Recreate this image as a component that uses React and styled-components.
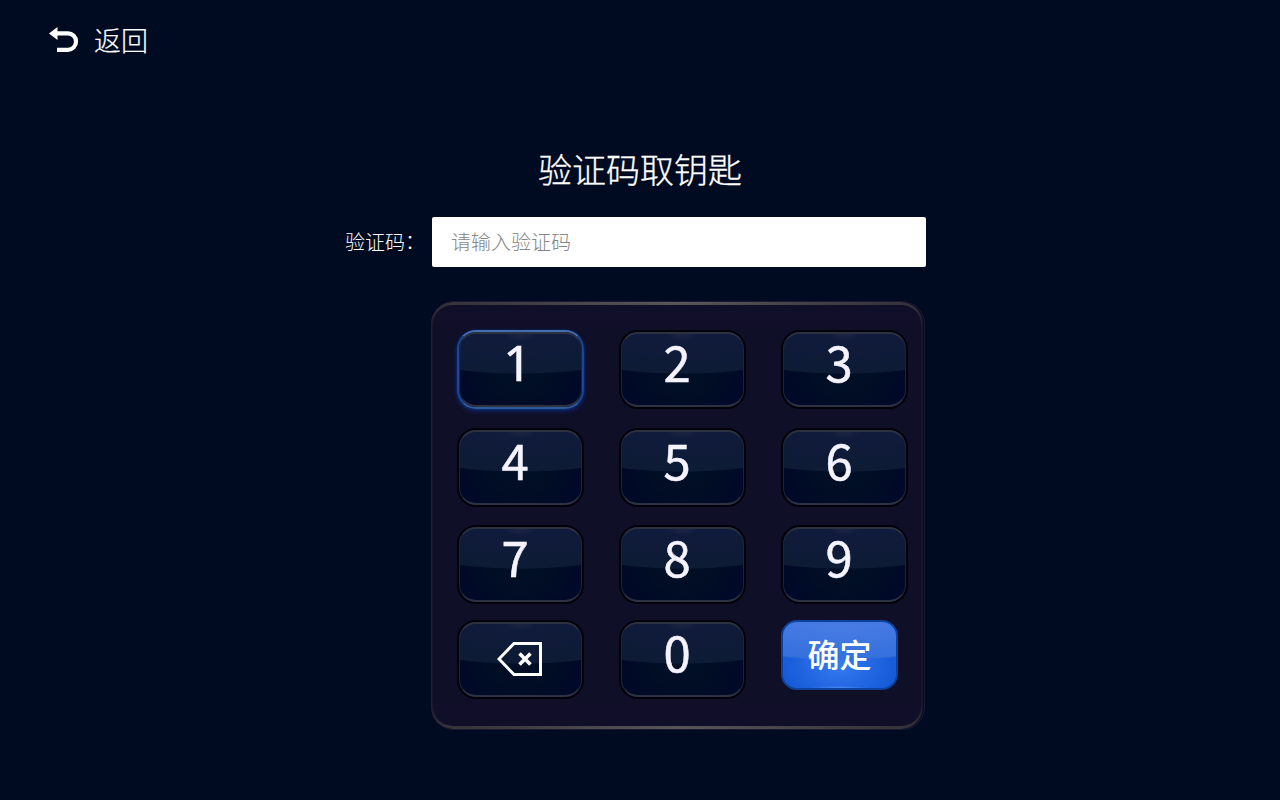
import React from "react";
import styled, { createGlobalStyle, css } from "styled-components";

const GlobalStyle = createGlobalStyle`
  * { box-sizing: border-box; }
  body {
    margin: 0;
    background: #000b21;
    font-family: "Noto Sans CJK SC", sans-serif;
  }
`;

const Screen = styled.main`
  display: flex;
  flex-direction: column;
  width: 1280px;
  height: 800px;
  overflow: hidden;
  color: #fff;
  background: #000b21;
`;

const Header = styled.header`
  display: flex;
  height: 80px;
  padding: 20px 0 0 48px;
`;

const BackButton = styled.button`
  display: flex;
  align-items: center;
  gap: 14px;
  height: 40px;
  padding: 0;
  border: 0;
  background: none;
  color: #fff;
  font: 300 27px/40px "Noto Sans CJK SC", sans-serif;
  -webkit-text-stroke: 0.2px #fff;
`;

const Title = styled.h1`
  margin: 64px 0 0;
  height: 50px;
  text-align: center;
  font-size: 34px;
  line-height: 50px;
  font-weight: 300;
  -webkit-text-stroke: 0.3px #fff;
`;

const Field = styled.label`
  display: flex;
  align-items: center;
  margin: 23px 0 0 345px;
  height: 50px;
`;

const FieldLabel = styled.span`
  display: flex;
  width: 87px;
  font-size: 20px;
  line-height: 50px;
  font-weight: 300;
  white-space: nowrap;
`;

const Colon = styled.span`
  line-height: 47px;
`;

const CodeInput = styled.input`
  width: 494px;
  height: 50px;
  padding: 0 19px 2px;
  border: 0;
  border-radius: 2px;
  outline: 0;
  background: #fff;
  color: #222;
  font: 300 20px "Noto Sans CJK SC", sans-serif;
  &::placeholder { color: #858585; opacity: 1; }
`;

const Panel = styled.section`
  position: relative;
  width: 494px;
  height: 429px;
  margin: 34px 0 0 431px;
  padding: 29px 0 0 26px;
  border-radius: 23px;
  background: #110f29;
  box-shadow: inset 0 0 0 1px #1b1832, inset -3px 0 0 -1px #090a22;
  &::before {
    content: "";
    position: absolute;
    inset: 1px 2px 1px 0;
    border: solid transparent;
    border-width: 3px 2px;
    border-radius: 22px;
    background:
      linear-gradient(#110f29, #110f29) padding-box,
      linear-gradient(90deg, #36333a, #3b3840 10%, #5b5959 50%, #3b3840 90%, #36333a) border-box;
    mask-image: linear-gradient(#000 0, #0009 14px, #0003 24px, #0003 calc(100% - 24px), #0009 calc(100% - 14px), #000 100%);
  }
`;

const Keys = styled.div`
  position: relative;
  display: grid;
  grid-template-columns: repeat(3, 127px);
  grid-template-rows: repeat(4, 79px);
  column-gap: 35px;
`;

const activeKey = css`
  border-color: #194793;
  border-top-color: #416eb1;
  border-bottom-color: #315996;
  box-shadow: 0 2px 4px #0739a0aa, 0 0 2px #0750bf88, inset 0 0 2px #1757a9;
`;

const Key = styled.button`
  position: relative;
  width: 127px;
  height: 79px;
  margin-top: ${({ $shift }) => $shift || 0}px;
  padding: 0 11px 18px 0;
  display: flex;
  align-items: center;
  justify-content: center;
  border: 2px solid #020208;
  border-radius: 19px;
  color: #f5f3ff;
  background:
    radial-gradient(ellipse 16px 9px at 50% 0, #30324988, transparent),
    radial-gradient(ellipse 150px 42px at 50% 0, #111b3e 0, #0d1b34 98%, transparent 100%),
    radial-gradient(ellipse 80px 62px at 50% 55%, #000f26 0, #000d25 40%, #00072a 100%);
  font: 400 49px/59px "Noto Sans CJK SC", sans-serif;
  -webkit-text-stroke: 0.5px #f5f3ff;
  ${({ $active }) => $active && activeKey}
  &::after {
    content: "";
    position: absolute;
    inset: 0;
    border: 1px solid #1a263b;
    border-top: 2px solid #2c3140;
    border-bottom: 2px solid #2c3243;
    border-radius: 17px;
  }
`;

const PlainOne = styled.span`
  margin-left: 5px;
  padding-top: 4px;
  font: 400 50px/59px "Noto Sans", sans-serif;
`;

const ConfirmKey = styled.button`
  width: 117px;
  height: 70px;
  padding: 0 0 4px;
  border: 2px solid #0d419b;
  border-radius: 16px;
  color: #fff;
  background:
    radial-gradient(ellipse 30px 2px at 50% 100%, #4e8df0, transparent),
    radial-gradient(ellipse 150px 38px at 50% 0, #4b7de5 0, #3470dc 97%, transparent 100%),
    radial-gradient(ellipse 65px 45px at 50% 65%, #347af0, #1256d4);
  box-shadow: inset 0 1px 1px #427bdb;
  font: 500 32px/62px "Noto Sans CJK SC", sans-serif;
`;

const ConfirmKeySlot = styled.div`
  padding-top: 53px;
`;

const BackIcon = () => (
  <svg width="32" height="32" viewBox="0 0 32 32">
    <path d="M1 9.5 9.5 3v13Z" fill="#fff" />
    <path d="M8 9.3h12a8 8.2 0 0 1 0 16.5H9" fill="none" stroke="#fff" strokeWidth="4.2" />
  </svg>
);

const DeleteIcon = styled.svg`
  position: absolute;
  left: 38px;
  top: 19px;
`;

const digits = ["1", "2", "3", "4", "5", "6", "7", "8", "9"];
const rowShift = [0, 19, 37];

export default function App() {
  return (
    <Screen>
      <GlobalStyle />
      <Header>
        <BackButton><BackIcon />返回</BackButton>
      </Header>
      <Title>验证码取钥匙</Title>
      <Field>
        <FieldLabel>验证码<Colon>：</Colon></FieldLabel>
        <CodeInput placeholder="请输入验证码" />
      </Field>
      <Panel>
        <Keys>
          {digits.map((digit, i) => (
            <Key key={digit} $active={i === 0} $shift={rowShift[Math.floor(i / 3)]}>
              {digit === "1" ? <PlainOne>1</PlainOne> : digit}
            </Key>
          ))}
          <Key $shift={53} aria-label="删除">
            <DeleteIcon width="48" height="36" viewBox="0 0 48 36" fill="none" stroke="#fff">
              <path d="M2 18 17 2.5h26.5v31H17Z" strokeWidth="3" />
              <path d="m22.5 12.5 11 11m0-11-11 11" strokeWidth="3.6" />
            </DeleteIcon>
          </Key>
          <Key $shift={53}>0</Key>
          <ConfirmKeySlot><ConfirmKey>确定</ConfirmKey></ConfirmKeySlot>
        </Keys>
      </Panel>
    </Screen>
  );
}
